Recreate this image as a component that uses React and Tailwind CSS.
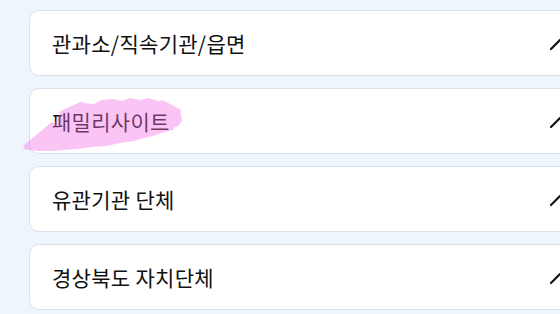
// App.jsx
// Accordion list of site links (collapsed headers only), cut off at the right edge.

const items = [
  { label: '관과소/직속기관/읍면' },
  { label: '패밀리사이트', marked: true },
  { label: '유관기관 단체' },
  { label: '경상북도 자치단체' },
];

function Chevron() {
  return (
    <svg width="20" height="20" viewBox="0 0 20 20" fill="none" className="shrink-0">
      <path d="M1 16 L10 7 L19 16" stroke="#111" strokeWidth="2.2" strokeLinecap="round" strokeLinejoin="round" />
    </svg>
  );
}

// pink marker scribble drawn over the second header
function Highlight() {
  return (
    <svg
      width="165"
      height="60"
      viewBox="0 0 165 60"
      className="pointer-events-none absolute left-[-8px] top-[6px]"
    >
      <g opacity="0.4" fill="#f570e6" stroke="#f570e6" strokeLinecap="round" strokeLinejoin="round">
        <path
          stroke="none"
          d="M3 52 L12 44 L20 40 L26 33 L33 27 L38 19 L46 14 L55 11 L62 8 L72 9 L80 5 L92 4 L100 6 L108 3 L118 5 L126 3 L136 6 L146 9 L154 13 L159 19 L160 26 L156 31 L146 35 L134 40 L122 43 L112 46 L98 48 L84 51 L70 52 L56 54 L42 55 L28 56 L16 56 L7 55 Z"
        />
        <path fill="none" strokeWidth="5" d="M4 52 L30 30 M40 18 L60 9 M20 42 L44 26" />
        <path fill="none" strokeWidth="4" d="M110 44 L150 33 M140 7 L157 16" />
      </g>
    </svg>
  );
}

function Row({ label, marked }) {
  return (
    <button
      type="button"
      className="relative flex h-[66px] w-[560px] items-center justify-between rounded-[10px] border border-[#d9e1ea] bg-white pl-[22px] pr-[18px] text-left"
    >
      <span className="text-[21px] font-normal leading-none tracking-[0.3px] text-[#111] [font-family:'Noto_Sans_CJK_KR',sans-serif]">
        {label}
      </span>
      <Chevron />
      {marked && <Highlight />}
    </button>
  );
}

export default function App() {
  return (
    <div className="h-[314px] w-[560px] overflow-hidden bg-[#eef5fd]">
      <div className="flex flex-col gap-[12px] pl-[29px] pt-[10px]">
        {items.map((item) => (
          <Row key={item.label} {...item} />
        ))}
      </div>
    </div>
  );
}
